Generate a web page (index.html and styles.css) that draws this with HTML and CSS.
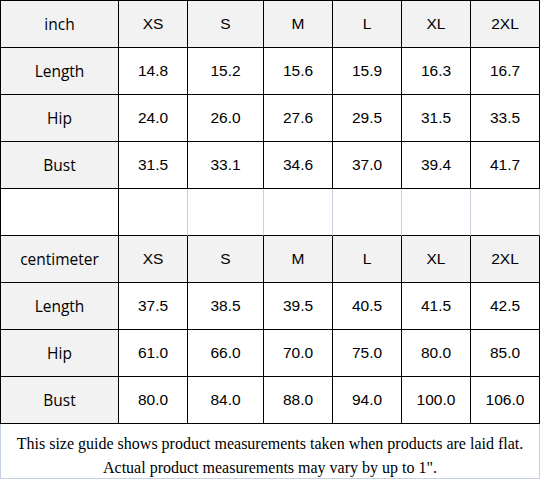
FILE: index.html
```html
<!DOCTYPE html>
<html>
<head>
<meta charset="utf-8">
<link rel="stylesheet" href="styles.css">
</head>
<body>
<div class="guide">
<table class="sizes">
  <colgroup>
    <col class="c-label"><col class="c-n"><col class="c-w"><col class="c-n"><col class="c-n"><col class="c-n"><col class="c-n">
  </colgroup>
  <tbody>
    <tr class="head"><td class="lab">inch</td><td>XS</td><td>S</td><td>M</td><td>L</td><td>XL</td><td>2XL</td></tr>
    <tr><td class="lab">Length</td><td>14.8</td><td>15.2</td><td>15.6</td><td>15.9</td><td>16.3</td><td>16.7</td></tr>
    <tr><td class="lab">Hip</td><td>24.0</td><td>26.0</td><td>27.6</td><td>29.5</td><td>31.5</td><td>33.5</td></tr>
    <tr><td class="lab">Bust</td><td>31.5</td><td>33.1</td><td>34.6</td><td>37.0</td><td>39.4</td><td>41.7</td></tr>
    <tr class="blank"><td class="first"></td><td></td><td></td><td></td><td></td><td></td><td></td></tr>
    <tr class="head"><td class="lab">centimeter</td><td>XS</td><td>S</td><td>M</td><td>L</td><td>XL</td><td>2XL</td></tr>
    <tr><td class="lab">Length</td><td>37.5</td><td>38.5</td><td>39.5</td><td>40.5</td><td>41.5</td><td>42.5</td></tr>
    <tr><td class="lab">Hip</td><td>61.0</td><td>66.0</td><td>70.0</td><td>75.0</td><td>80.0</td><td>85.0</td></tr>
    <tr><td class="lab">Bust</td><td>80.0</td><td>84.0</td><td>88.0</td><td>94.0</td><td>100.0</td><td>106.0</td></tr>
  </tbody>
</table>
<div class="note">
  <p>This size guide shows product measurements taken when products are laid flat.</p>
  <p>Actual product measurements may vary by up to 1".</p>
</div>
</div>
</body>
</html>
```
FILE: styles.css
```css
html, body {
  margin: 0;
  padding: 0;
  background: #ffffff;
}
.guide {
  width: 540px;
}
.sizes {
  width: 540px;
  table-layout: fixed;
  border-collapse: separate;
  border-spacing: 0;
  border-top: 1px solid #000;
  border-left: 1px solid #000;
  font-family: "Liberation Sans", Arial, sans-serif;
  font-size: 15.5px;
  color: #000;
}
.c-label { width: 118px; }
.c-n { width: 69px; }
.c-w { width: 76px; }
.sizes tr { height: 47px; }
.sizes td {
  box-sizing: border-box;
  height: 47px;
  padding: 0;
  text-align: center;
  vertical-align: middle;
  border-right: 1px solid #000;
  border-bottom: 1px solid #000;
  background: #fff;
}
.sizes .head td,
.sizes td.lab {
  background: #f2f2f2;
}
.sizes td.lab {
  font-family: "Open Sans", "Noto Sans", sans-serif;
  font-size: 15.5px;
}
.sizes .blank td {
  border-right-color: #c8d0dc;
}
.sizes .blank td.first {
  border-right-color: #000;
}
.note {
  box-sizing: border-box;
  height: 55px;
  border-left: 1px solid #c5d1e3;
  border-right: 1px solid #c5d1e3;
  border-bottom: 1px solid #c5d1e3;
  padding-top: 8px;
  font-family: "Liberation Serif", "Times New Roman", serif;
  font-size: 16px;
  line-height: 24px;
  color: #000;
  text-align: center;
}
.note p {
  margin: 0;
}
```
